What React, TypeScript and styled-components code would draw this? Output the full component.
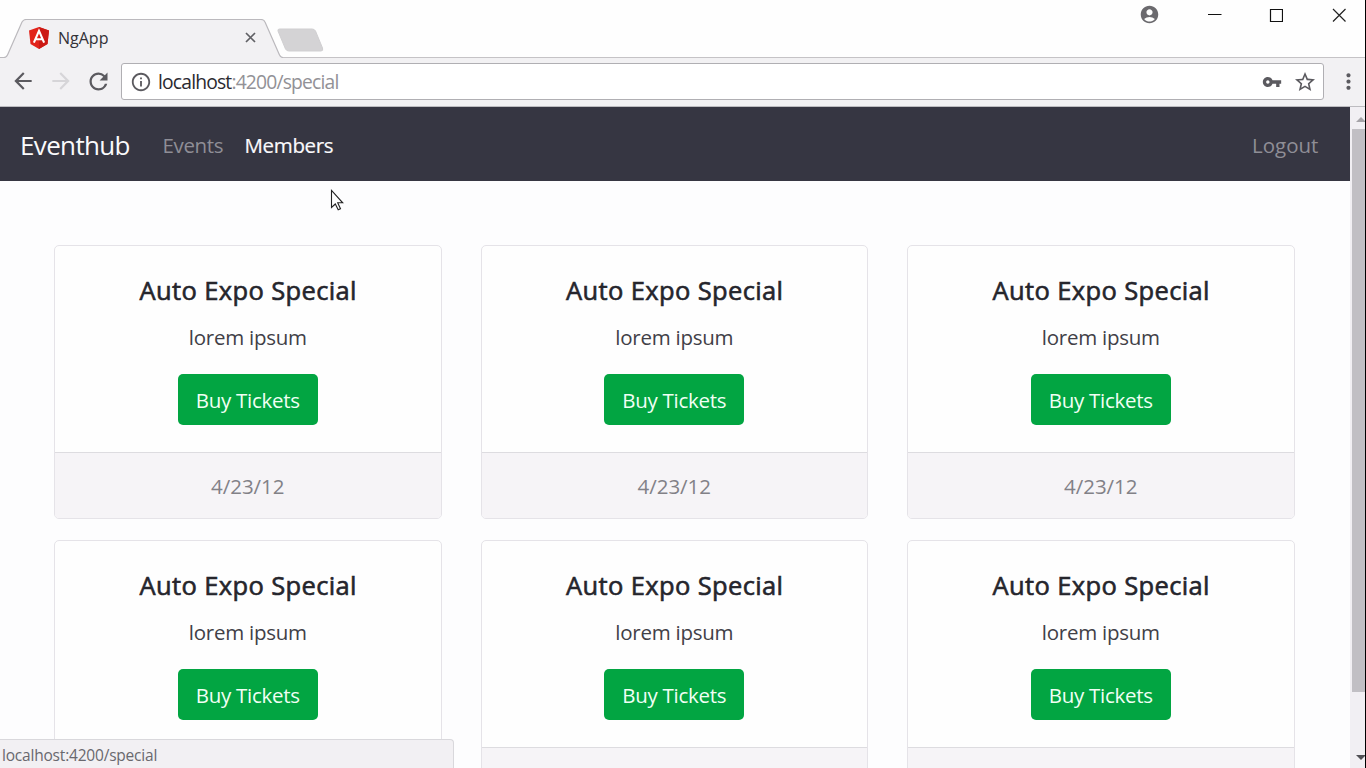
import React from "react";
import styled, { createGlobalStyle, css } from "styled-components";
import {
  MdAccountCircle,
  MdArrowBack,
  MdArrowForward,
  MdInfoOutline,
  MdMoreVert,
  MdRefresh,
  MdStarBorder,
  MdVpnKey,
} from "react-icons/md";

const GlobalStyle = createGlobalStyle`
  * { box-sizing: border-box; }
  html, body { margin: 0; padding: 0; overflow: hidden; }
  body {
    font-family: "Segoe UI", "Open Sans", "Noto Sans", sans-serif;
    color: #25252c;
    background: #fdfdfe;
  }
  svg { display: block; flex: none; }
`;

const Window = styled.div`
  display: flex;
  flex-direction: column;
  width: 1366px;
  height: 768px;
  overflow: hidden;
  background: #fefefe;
  border-right: 1px solid #000;
  position: relative;
`;

const TabStrip = styled.header`
  display: flex;
  justify-content: space-between;
  height: 58px;
  flex: none;
  box-shadow: inset 0 -1px #c5c3c6;
`;

const Tabs = styled.div`
  display: flex;
  align-items: flex-end;
`;

const Tab = styled.div`
  position: relative;
  display: flex;
  align-items: center;
  width: 282px;
  height: 39px;
  padding: 0 25px 2px 29px;
`;

const TabShape = styled.svg`
  position: absolute;
  inset: 0;
`;

const TabContent = styled.div`
  position: relative;
  display: flex;
  align-items: center;
  flex: 1;
`;

const TabTitle = styled.span`
  flex: 1;
  margin-left: 9px;
  font-size: 16px;
  line-height: 22px;
  color: #333238;
`;

const NewTab = styled.svg`
  margin: 0 0 6px -6px;
`;

const WindowControls = styled.div`
  display: flex;
  align-items: flex-start;
  padding: 3px 19px 0 0;
`;

const Control = styled.div<{ $gap?: number }>`
  display: flex;
  align-items: center;
  justify-content: center;
  height: 24px;
  margin-left: ${({ $gap = 0 }) => $gap}px;
`;

const AccountControl = styled(Control)`
  height: 22px;
`;

const Toolbar = styled.div`
  display: flex;
  align-items: center;
  height: 49px;
  flex: none;
  padding: 0 5px 2px 10px;
  background: #f2f1f3;
  border-bottom: 1px solid #bdbcc0;
`;

const ToolButton = styled.div<{ $faded?: boolean; $width: number }>`
  display: flex;
  align-items: center;
  justify-content: center;
  flex: none;
  width: ${({ $width }) => $width}px;
  color: ${({ $faded }) => ($faded ? "#d6d5d8" : "#5b5a5f")};
`;

const MenuButton = styled(ToolButton)`
  padding-left: 12px;
`;

const AddressBar = styled.div`
  display: flex;
  align-items: center;
  flex: 1;
  height: 37px;
  margin-top: 1px;
  padding: 0 6px 0 8px;
  background: #fff;
  border: 1px solid #b0afb3;
  border-radius: 3px;
  color: #5b5a5f;
`;

const Url = styled.span`
  flex: 1;
  margin-left: 6px;
  font-size: 19.3px;
  line-height: 28px;
  letter-spacing: -0.82px;
  color: #929196;
  b { font-weight: 400; color: #2b2a30; }
`;

const StarSlot = styled.div`
  margin-left: 11px;
`;

const Viewport = styled.div`
  display: flex;
  flex: 1;
  min-height: 0;
`;

const Page = styled.div`
  flex: 1;
  overflow: hidden;
  background: #fdfdfe;
`;

const Navbar = styled.nav`
  display: flex;
  align-items: center;
  height: 74px;
  padding: 2px 32px 0 20px;
  background: #363642;
`;

const Brand = styled.span`
  margin-right: 33.5px;
  width: 109px;
  font-size: 26px;
  line-height: 40px;
  letter-spacing: -0.65px;
  white-space: nowrap;
  color: #fafafc;
`;

const NavLink = styled.span<{ $active?: boolean; $width: number }>`
  width: ${({ $width }) => $width}px;
  margin-right: 22px;
  font-size: 20.5px;
  line-height: 32px;
  letter-spacing: -0.35px;
  white-space: nowrap;
  color: ${({ $active }) => ($active ? "#fafafc" : "#8f8e96")};
  ${({ $active }) => $active && css`-webkit-text-stroke: 0.2px #fafafc;`}
  &:last-child {
    margin: 0 0 0 auto;
    letter-spacing: 0;
  }
`;

const CardGrid = styled.main`
  display: grid;
  grid-template-columns: repeat(3, 387.5px);
  column-gap: 39px;
  row-gap: 21px;
  padding: 64px 0 0 54px;
`;

const Card = styled.article`
  display: flex;
  flex-direction: column;
  height: 273.5px;
  border: 1px solid #e5e3e8;
  border-radius: 5px;
  overflow: hidden;
  text-align: center;
  background: #fefefe;
`;

const CardBody = styled.div`
  display: flex;
  flex-direction: column;
  align-items: center;
  height: 206px;
  padding-top: 26px;
`;

const CardTitle = styled.h4`
  margin: 0 0 13px;
  padding-left: 1px;
  font-size: 25.5px;
  font-weight: 400;
  line-height: 36px;
  letter-spacing: 0.37px;
  -webkit-text-stroke: 0.6px #25252c;
`;

const CardText = styled.p`
  margin: 0 0 21px;
  font-size: 20.5px;
  line-height: 32px;
  letter-spacing: -0.25px;
  color: #414047;
`;

const BuyButton = styled.button`
  width: 140px;
  height: 51px;
  padding: 1px 0 0;
  border: 0;
  border-radius: 5px;
  background: #02a542;
  color: #f0fff4;
  font-family: inherit;
  font-size: 20.5px;
  letter-spacing: -0.3px;
`;

const CardFooter = styled.footer`
  flex: 1;
  padding-top: 17px;
  border-top: 1px solid #dddce0;
  background: #f6f4f7;
  color: #828187;
  font-size: 20.5px;
  line-height: 32px;
`;

const Scrollbar = styled.div`
  display: flex;
  flex-direction: column;
  align-items: flex-end;
  width: 15px;
  background: #f1eff3;
`;

const ScrollThumb = styled.div`
  width: 13px;
  height: 563px;
  background: #c1bfc4;
`;

const StatusBubble = styled.div`
  position: absolute;
  left: 0;
  bottom: 0;
  width: 454px;
  height: 29px;
  padding: 3px 0 0 2px;
  border: solid #d9d8dc;
  border-width: 1px 1px 0 0;
  border-top-right-radius: 4px;
  background: #f2f0f3;
  color: #69686e;
  font-size: 15.5px;
  line-height: 24px;
  letter-spacing: -0.2px;
`;

const Pointer = styled.svg`
  position: absolute;
  left: 330px;
  top: 188px;
`;

const AngularLogo = () => (
  <svg width="20" height="22" viewBox="0 0 20 22">
    <path d="M10 0 20 3.6 18.5 17 10 22 1.5 17 0 3.6Z" fill="#e2231a" />
    <path d="M10 0 20 3.6 18.5 17 10 22Z" fill="#cc1a14" />
    <path d="M4.9 15.6 10 3.9 15.1 15.6M7 12.2H13" fill="none" stroke="#fff" strokeWidth="2.1" />
  </svg>
);

const cards = Array.from({ length: 6 }, (_, id) => ({
  id,
  name: "Auto Expo Special",
  description: "lorem ipsum",
  date: "4/23/12",
}));

export default function App() {
  return (
    <Window>
      <GlobalStyle />
      <TabStrip>
        <Tabs>
          <Tab>
            <TabShape width="290" height="39" viewBox="0 0 290 39">
              <path d="M0 38.5H4Q6.5 38.5 7.5 36L22 3Q23.5 .5 26 .5H261Q264 .5 265 3L279.5 36Q280.5 38.5 283 38.5V39H0Z" fill="#f2f1f3" />
              <path d="M0 38.5H4Q6.5 38.5 7.5 36L22 3Q23.5 .5 26 .5H261Q264 .5 265 3L279.5 36Q280.5 38.5 283 38.5" fill="none" stroke="#bbb9bd" strokeWidth="1.2" />
              <path d="M8 38.5H279" stroke="#f2f1f3" />
            </TabShape>
            <TabContent>
              <AngularLogo />
              <TabTitle>NgApp</TabTitle>
              <svg width="13" height="13" viewBox="0 0 13 13">
                <path d="m2 2 9 9m0-9-9 9" stroke="#606064" strokeWidth="1.7" />
              </svg>
            </TabContent>
          </Tab>
          <NewTab width="50" height="24" viewBox="0 0 50 24">
            <path d="M3.5 1H36Q38.5 1 39.5 3L46.5 20Q47.5 23 45 23H13Q10.5 23 9.5 21L2 3Q1.5 1 3.5 1Z" fill="#d4d3d5" stroke="#d0cfd1" />
          </NewTab>
        </Tabs>
        <WindowControls>
          <AccountControl><MdAccountCircle size={21} color="#6b6a6e" /></AccountControl>
          <Control $gap={48}>
            <svg width="14" height="14"><path d="M0 6.5H13.5" stroke="#111" /></svg>
          </Control>
          <Control $gap={47}>
            <svg width="14" height="14"><path d="M1.5 1.5H13.5V13.5H1.5Z" fill="none" stroke="#111" strokeWidth="1.2" /></svg>
          </Control>
          <Control $gap={49}>
            <svg width="14" height="14"><path d="M1 1 13.5 13.5M13.5 1 1 13.5" stroke="#222" strokeWidth="1.2" /></svg>
          </Control>
        </WindowControls>
      </TabStrip>
      <Toolbar>
        <ToolButton $width={26}><MdArrowBack size={26} /></ToolButton>
        <ToolButton $width={49} $faded><MdArrowForward size={26} /></ToolButton>
        <ToolButton $width={26}><MdRefresh size={27} /></ToolButton>
        <ToolButton $width={10} />
        <AddressBar>
          <MdInfoOutline size={22} />
          <Url><b>localhost</b>:4200/special</Url>
          <MdVpnKey size={20} />
          <StarSlot><MdStarBorder size={24} /></StarSlot>
        </AddressBar>
        <MenuButton $width={36}>
          <MdMoreVert size={25} />
        </MenuButton>
      </Toolbar>
      <Viewport>
        <Page>
          <Navbar>
            <Brand>Eventhub</Brand>
            <NavLink $width={60}>Events</NavLink>
            <NavLink $width={88} $active>Members</NavLink>
            <NavLink $width={66}>Logout</NavLink>
          </Navbar>
          <CardGrid>
            {cards.map((card) => (
              <Card key={card.id}>
                <CardBody>
                  <CardTitle>{card.name}</CardTitle>
                  <CardText>{card.description}</CardText>
                  <BuyButton>Buy Tickets</BuyButton>
                </CardBody>
                <CardFooter>{card.date}</CardFooter>
              </Card>
            ))}
          </CardGrid>
        </Page>
        <Scrollbar>
          <svg width="13" height="22" viewBox="0 0 13 22">
            <path d="M4 15 9 10 13 14V15Z" fill="#a5a3a8" />
          </svg>
          <ScrollThumb />
          <svg width="13" height="76" viewBox="0 0 13 76">
            <path d="M4 63H13V64L9 68Z" fill="#515055" />
          </svg>
        </Scrollbar>
      </Viewport>
      <StatusBubble>localhost:4200/special</StatusBubble>
      <Pointer width="16" height="24" viewBox="0 0 16 24">
        <path d="M1.5 2.5V19.5L5.3 16 8.2 21.8 10.5 20.7 7.7 14.8H12.7Z" fill="#fff" stroke="#222" strokeWidth="1.1" />
      </Pointer>
    </Window>
  );
}
